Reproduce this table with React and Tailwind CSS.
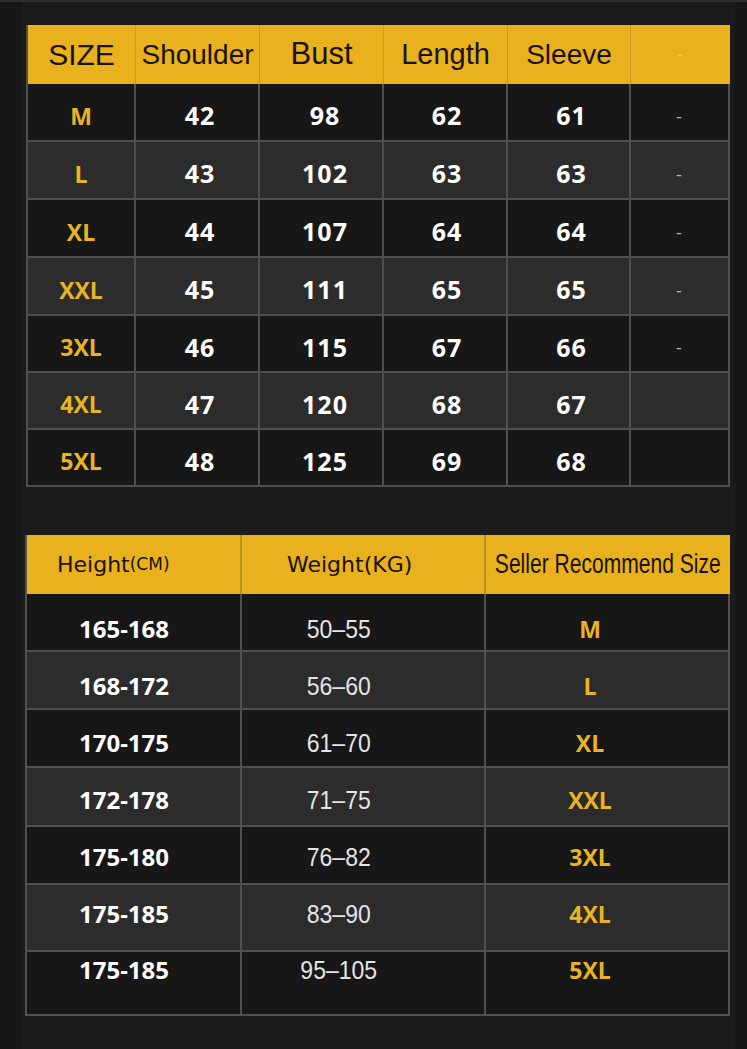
import React from "react";

const SIZE_ROWS = [
  { size: "M", shoulder: 42, bust: 98, length: 62, sleeve: 61, dash: true, h: "h-[58px]" },
  { size: "L", shoulder: 43, bust: 102, length: 63, sleeve: 63, dash: true, h: "h-[58px]" },
  { size: "XL", shoulder: 44, bust: 107, length: 64, sleeve: 64, dash: true, h: "h-[58px]" },
  { size: "XXL", shoulder: 45, bust: 111, length: 65, sleeve: 65, dash: true, h: "h-[58px]" },
  { size: "3XL", shoulder: 46, bust: 115, length: 67, sleeve: 66, dash: true, h: "h-[57px]" },
  { size: "4XL", shoulder: 47, bust: 120, length: 68, sleeve: 67, dash: false, h: "h-[57px]" },
  { size: "5XL", shoulder: 48, bust: 125, length: 69, sleeve: 68, dash: false, h: "h-[57px]" },
];

// row heights and text offsets follow the picture, the last rows sit a bit high
const FIT_ROWS = [
  { height: "165-168", weight: "50–55", size: "M", h: "h-[58px]", pt: "pt-[21px]" },
  { height: "168-172", weight: "56–60", size: "L", h: "h-[58px]", pt: "pt-[20px]" },
  { height: "170-175", weight: "61–70", size: "XL", h: "h-[58px]", pt: "pt-[19px]" },
  { height: "172-178", weight: "71–75", size: "XXL", h: "h-[59px]", pt: "pt-[18px]" },
  { height: "175-180", weight: "76–82", size: "3XL", h: "h-[58px]", pt: "pt-[16px]" },
  { height: "175-185", weight: "83–90", size: "4XL", h: "h-[67px]", pt: "pt-[15px]" },
  { height: "175-185", weight: "95–105", size: "5XL", h: "h-[64px]", pt: "pt-[4px]" },
];

const headFont = { fontFamily: '"Liberation Sans", Arial, sans-serif' };
const boldFont = { fontFamily: '"Open Sans", "Noto Sans", sans-serif' };
const wideFont = { fontFamily: '"DejaVu Sans", Verdana, sans-serif' };

function SizeTable() {
  const cell = "flex items-center justify-center pt-[8px] border-r-2 border-b-2 border-[#4f4f4f]";
  return (
    <div className="ml-[4px] w-[704px] border-l-2 border-[#4f4f4f]">
      {/* header */}
      <div
        className="grid grid-cols-[108px_124px_124px_124px_123px_99px] h-[59px] bg-[#e8b11d] text-[#1a1200]"
        style={headFont}
      >
        <div className="flex items-center justify-center text-[30px] border-r border-[#c99a1c]">SIZE</div>
        <div className="flex items-center justify-center text-[28px] border-r border-[#c99a1c]">Shoulder</div>
        <div className="flex items-center justify-center text-[31px] border-r border-[#c99a1c]">Bust</div>
        <div className="flex items-center justify-center text-[29px] border-r border-[#c99a1c]">Length</div>
        <div className="flex items-center justify-center text-[28px] border-r border-[#c99a1c]">Sleeve</div>
        <div className="flex items-center justify-center text-[16px] text-[#f3cc62]">-</div>
      </div>
      {SIZE_ROWS.map((r, i) => (
        <div
          key={r.size}
          className={`grid grid-cols-[108px_124px_124px_124px_123px_99px] ${r.h} ${
            i % 2 === 0 ? "bg-[#171717]" : "bg-[#2c2c2c]"
          } text-white font-bold text-[25px] tracking-[1px]`}
          style={boldFont}
        >
          <div className={`${cell} text-[#e9b423] text-[23px] tracking-normal`}>{r.size}</div>
          <div className={`${cell} pl-[6px]`}>{r.shoulder}</div>
          <div className={`${cell} pl-[8px]`}>{r.bust}</div>
          <div className={`${cell} pl-[4px]`}>{r.length}</div>
          <div className={`${cell} pl-[6px]`}>{r.sleeve}</div>
          <div className={`${cell} pt-[2px] text-[18px] font-normal text-[#b5b5b5]`}>{r.dash ? "-" : ""}</div>
        </div>
      ))}
    </div>
  );
}

function FitTable() {
  const cell = "flex items-start border-r-2 border-b-2 border-[#505050]";
  return (
    <div className="ml-[3px] w-[705px] border-l-2 border-[#505050]">
      <div className="grid grid-cols-[215px_244px_244px] h-[59px] bg-[#e8b11d] text-[#1a1200]">
        <div className="flex items-center pl-[30px] border-r-2 border-[#b8901e]" style={wideFont}>
          <span className="text-[22px]">Height</span>
          <span className="text-[17px]">(CM)</span>
        </div>
        <div className="flex items-center pl-[45px] border-r-2 border-[#b8901e]" style={wideFont}>
          <span className="text-[22px]">Weight(KG)</span>
        </div>
        <div className="flex items-center justify-center overflow-hidden" style={headFont}>
          <span className="inline-block text-[27px] scale-x-[0.78] whitespace-nowrap">Seller Recommend Size</span>
        </div>
      </div>
      {FIT_ROWS.map((r, i) => (
        <div
          key={i}
          className={`grid grid-cols-[215px_244px_244px] ${r.h} ${i % 2 === 0 ? "bg-[#171717]" : "bg-[#2c2c2c]"}`}
        >
          <div
            className={`${cell} ${r.pt} justify-center pr-[19px] text-white font-bold text-[24px] leading-[28px]`}
            style={boldFont}
          >
            {r.height}
          </div>
          <div
            className={`${cell} ${r.pt} justify-center pr-[48px] text-[#e4e4e4] text-[25px] leading-[28px]`}
            style={headFont}
          >
            <span className="inline-block scale-x-[0.92]">{r.weight}</span>
          </div>
          <div
            className={`${cell} ${r.pt} justify-center pr-[34px] text-[#e9b423] font-bold text-[23px] leading-[28px]`}
            style={boldFont}
          >
            {r.size}
          </div>
        </div>
      ))}
    </div>
  );
}

export default function App() {
  return (
    <div className="w-[747px] h-[1049px] flex bg-[#1b1b1b] border-t-2 border-[#2f2f2f] overflow-hidden">
      <div className="w-[22px] shrink-0 bg-[#171717]" />
      <div className="flex-1">
        <div className="pt-[23px]">
          <SizeTable />
        </div>
        <div className="pt-[48px]">
          <FitTable />
        </div>
      </div>
      <div className="w-[12px] shrink-0 bg-[#171717]" />
    </div>
  );
}
